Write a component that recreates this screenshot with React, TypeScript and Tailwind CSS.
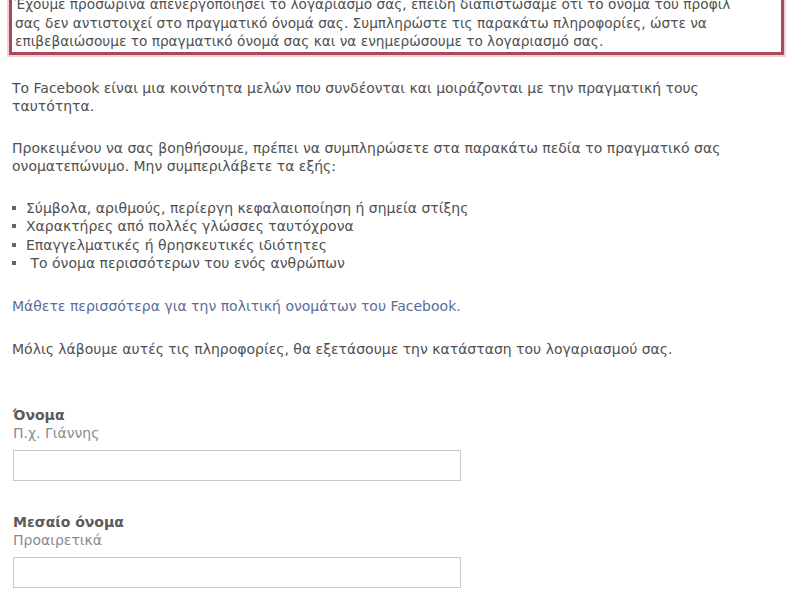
export default function App() {
  const rules = [
    "Σύμβολα, αριθμούς, περίεργη κεφαλαιοποίηση ή σημεία στίξης",
    "Χαρακτήρες από πολλές γλώσσες ταυτόχρονα",
    "Επαγγελματικές ή θρησκευτικές ιδιότητες",
    " Το όνομα περισσότερων του ενός ανθρώπων",
  ];

  return (
    <div className="h-[600px] w-[800px] overflow-hidden bg-white font-['DejaVu_Sans',sans-serif] text-[14px] leading-[18.5px] text-[#505050]">
      <div className="pl-[9px] pr-[16px]">
        {/* warning box, its top is scrolled out of view */}
        <div className="-mt-[24px] whitespace-nowrap border-[3px] border-[#a9495a] px-[3px] pb-[1px] pt-[16px] text-[13.7px] shadow-[0_0_0_2px_#f0d0d6]">
          Έχουμε προσωρινά απενεργοποιήσει το λογαριασμό σας, επειδή διαπιστώσαμε ότι το όνομα του προφίλ
          <br />
          σας δεν αντιστοιχεί στο πραγματικό όνομά σας. Συμπληρώστε τις παρακάτω πληροφορίες, ώστε να
          <br />
          επιβεβαιώσουμε το πραγματικό όνομά σας και να ενημερώσουμε το λογαριασμό σας.
        </div>
      </div>

      <div className="px-[12px]">
        <p className="mt-[24px]">
          Το Facebook είναι μια κοινότητα μελών που συνδέονται και μοιράζονται με την πραγματική τους
          <br />
          ταυτότητα.
        </p>

        <p className="mt-[23px]">
          Προκειμένου να σας βοηθήσουμε, πρέπει να συμπληρώσετε στα παρακάτω πεδία το πραγματικό σας
          <br />
          ονοματεπώνυμο. Μην συμπεριλάβετε τα εξής:
        </p>

        <ul className="mt-[23px]">
          {rules.map((r) => (
            <li key={r} className="flex items-center">
              <span className="mr-[10px] h-[4px] w-[4px] shrink-0 bg-[#666]" />
              <span className="whitespace-pre">{r}</span>
            </li>
          ))}
        </ul>

        <p className="mt-[24px]">
          <a href="#" className="text-[#5a6d9a]">
            Μάθετε περισσότερα για την πολιτική ονομάτων του Facebook.
          </a>
        </p>

        <p className="mt-[25px]">
          Μόλις λάβουμε αυτές τις πληροφορίες, θα εξετάσουμε την κατάσταση του λογαριασμού σας.
        </p>

        <div className="mt-[47px] pl-[1px]">
          <div className="font-bold text-[#5a5a5a]">Όνομα</div>
          <div className="text-[#8a8a8a]">Π.χ. Γιάννης</div>
          <input
            type="text"
            className="mt-[7px] block h-[31px] w-[448px] border border-[#c8c8c8] bg-white outline-none"
          />
        </div>

        <div className="mt-[32px] pl-[1px]">
          <div className="font-bold text-[#5a5a5a]">Μεσαίο όνομα</div>
          <div className="text-[#8a8a8a]">Προαιρετικά</div>
          <input
            type="text"
            className="mt-[7px] block h-[31px] w-[448px] border border-[#c8c8c8] bg-white outline-none"
          />
        </div>
      </div>
    </div>
  );
}
